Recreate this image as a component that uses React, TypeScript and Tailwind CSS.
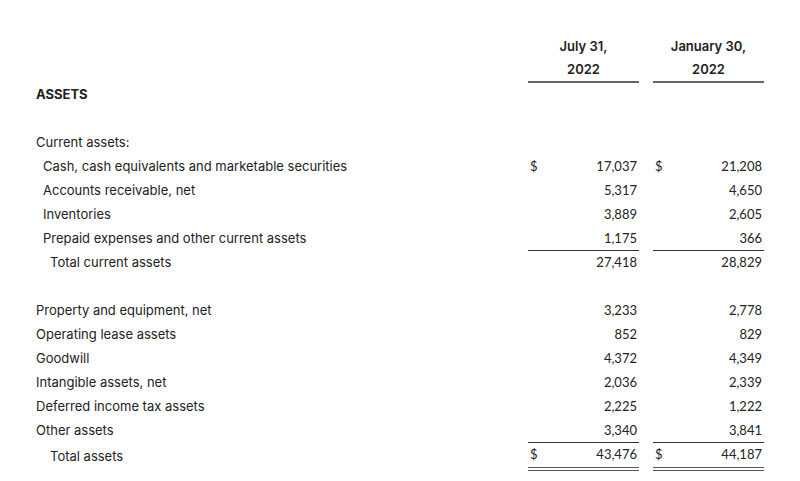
import React from 'react';

type Row = {
  label: string;
  indent: 0 | 1 | 2;
  a?: string;
  b?: string;
  dollar?: boolean;
  line?: 'single' | 'double';
  total?: boolean;
};

const current: Row[] = [
  { label: 'Cash, cash equivalents and marketable securities', indent: 1, a: '17,037', b: '21,208', dollar: true },
  { label: 'Accounts receivable, net', indent: 1, a: '5,317', b: '4,650' },
  { label: 'Inventories', indent: 1, a: '3,889', b: '2,605' },
  { label: 'Prepaid expenses and other current assets', indent: 1, a: '1,175', b: '366', line: 'single' },
  { label: 'Total current assets', indent: 2, a: '27,418', b: '28,829' },
];

const other: Row[] = [
  { label: 'Property and equipment, net', indent: 0, a: '3,233', b: '2,778' },
  { label: 'Operating lease assets', indent: 0, a: '852', b: '829' },
  { label: 'Goodwill', indent: 0, a: '4,372', b: '4,349' },
  { label: 'Intangible assets, net', indent: 0, a: '2,036', b: '2,339' },
  { label: 'Deferred income tax assets', indent: 0, a: '2,225', b: '1,222' },
  { label: 'Other assets', indent: 0, a: '3,340', b: '3,841', line: 'single' },
  { label: 'Total assets', indent: 2, a: '43,476', b: '44,187', dollar: true, line: 'double', total: true },
];

const indentCls = ['pl-0', 'pl-[7px]', 'pl-[14px]'];

function Cell({ value, dollar, line }: { value?: string; dollar?: boolean; line?: Row['line'] }) {
  const border =
    line === 'single'
      ? 'border-b border-[#333]'
      : line === 'double'
        ? 'border-b-4 border-double border-[#555]'
        : '';
  return (
    <div className={`w-[111px] h-full flex items-center justify-between px-[2px] font-['Lato',sans-serif] ${border}`}>
      <span>{dollar ? '$' : ''}</span>
      <span>{value}</span>
    </div>
  );
}

function Line({ row }: { row: Row }) {
  return (
    <div className={`flex items-stretch ${row.total ? 'h-[28px]' : 'h-6'}`}>
      <div className={`w-[492px] flex items-center ${indentCls[row.indent]}`}>{row.label}</div>
      <Cell value={row.a} dollar={row.dollar} line={row.line} />
      <div className="w-[14px]" />
      <Cell value={row.b} dollar={row.dollar} line={row.line} />
    </div>
  );
}

export default function App() {
  return (
    <div className="w-[800px] h-[481px] bg-white pt-[35px] pl-[36px] text-[13px] text-[#222] font-['Inter',sans-serif] overflow-hidden">
      <div className="flex h-6">
        <div className="w-[492px]" />
        <div className="w-[111px] flex items-center justify-center font-semibold">July 31,</div>
        <div className="w-[14px]" />
        <div className="w-[111px] flex items-center justify-center font-semibold">January 30,</div>
      </div>
      <div className="flex h-6">
        <div className="w-[492px]" />
        <div className="w-[111px] flex items-center justify-center font-semibold border-b-2 border-[#666]">2022</div>
        <div className="w-[14px]" />
        <div className="w-[111px] flex items-center justify-center font-semibold border-b-2 border-[#666]">2022</div>
      </div>
      <div className="h-6 flex items-center font-bold">ASSETS</div>
      <div className="h-6" />
      <div className="h-6 flex items-center">Current assets:</div>
      {current.map((r) => (
        <Line key={r.label} row={r} />
      ))}
      <div className="h-6" />
      {other.map((r) => (
        <Line key={r.label} row={r} />
      ))}
    </div>
  );
}
